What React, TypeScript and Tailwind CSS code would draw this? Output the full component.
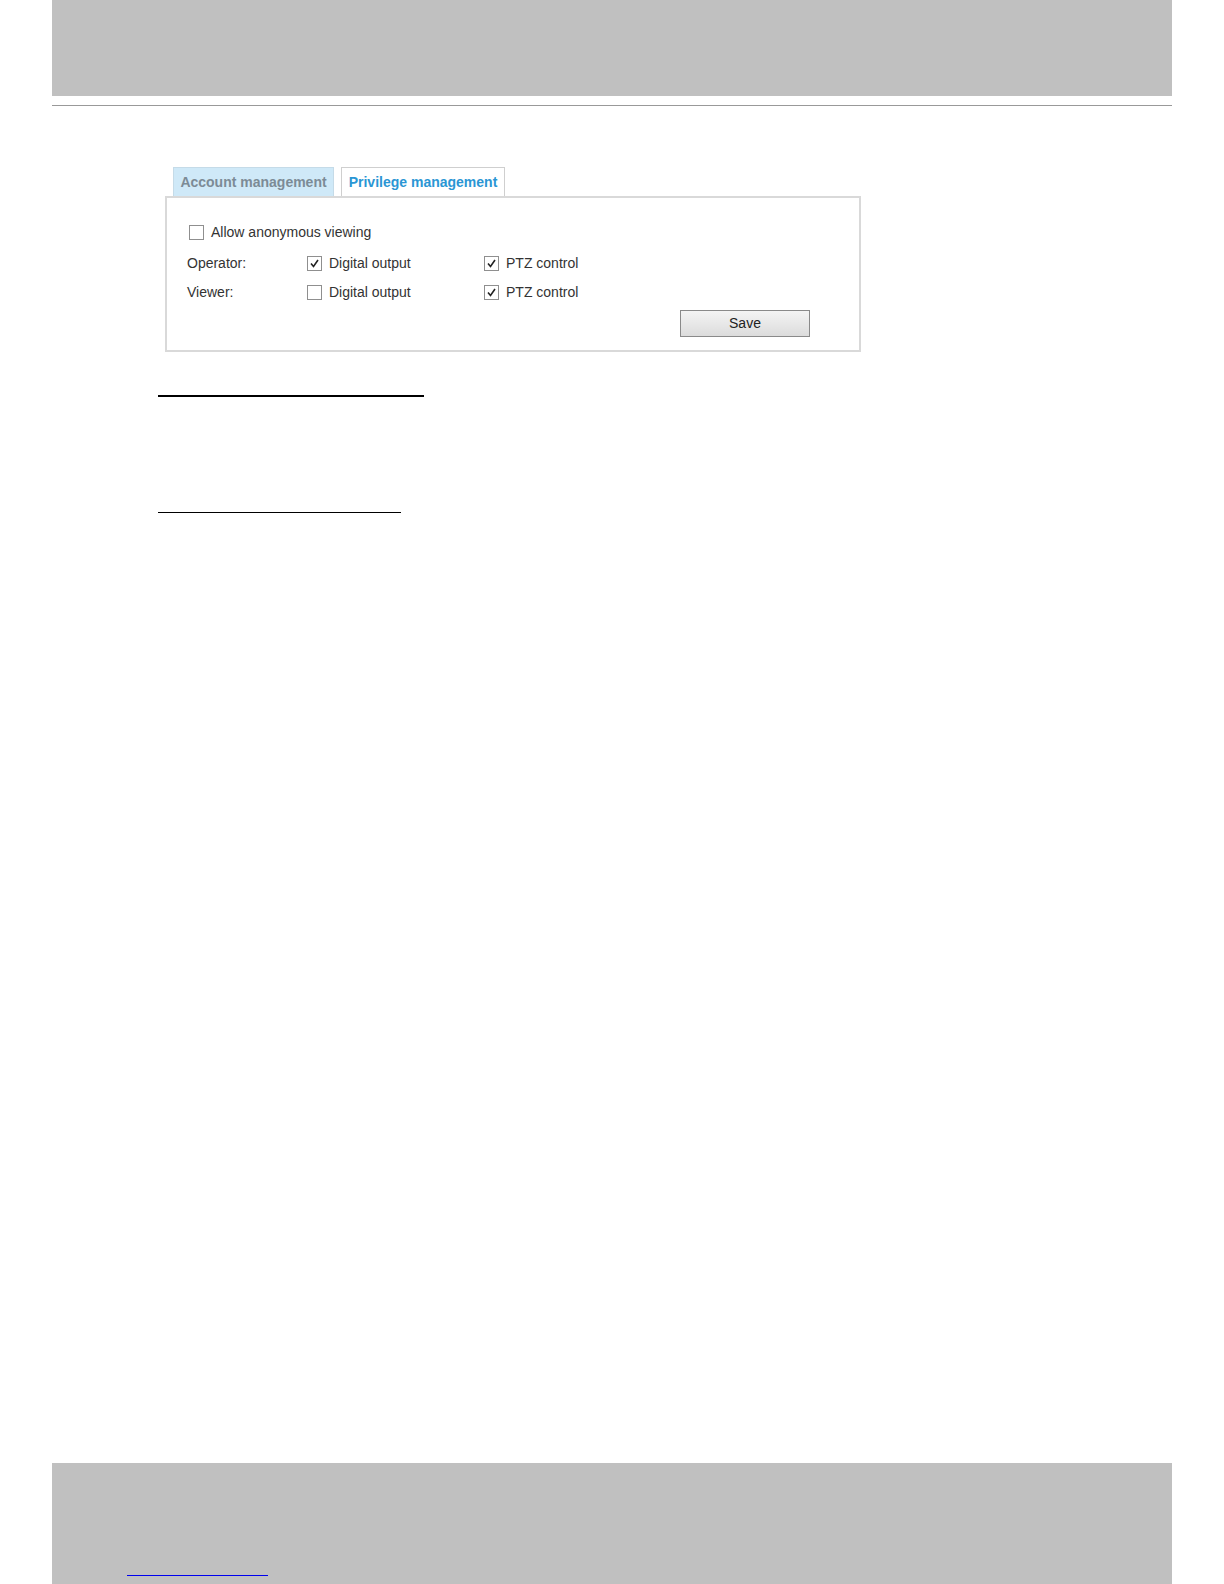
import React from 'react';

const font = { fontFamily: '"Liberation Sans", Arial, sans-serif' };

const Box: React.FC<{ checked?: boolean }> = ({ checked }) => (
  <span className="w-[15px] h-[15px] border border-[#8f8f8f] bg-white flex items-center justify-center shrink-0">
    {checked && (
      <svg width="11" height="11" viewBox="0 0 11 11">
        <path d="M2 5.5 L4.5 8.5 L9 2" fill="none" stroke="#222" strokeWidth="1.6" />
      </svg>
    )}
  </span>
);

const Option: React.FC<{ checked?: boolean; label: string; className?: string }> = ({ checked, label, className }) => (
  <label className={`flex items-center gap-[7px] ${className ?? ''}`}>
    <Box checked={checked} />
    <span>{label}</span>
  </label>
);

const rows = [
  { role: 'Operator:', dio: true, ptz: true },
  { role: 'Viewer:', dio: false, ptz: true },
];

const App: React.FC = () => {
  return (
    <div className="w-[1224px] h-[1584px] bg-white flex flex-col" style={font}>
      {/* header band */}
      <div className="mx-[52px] h-[96px] bg-[#c0c0c0]" />
      <div className="mx-[52px] mt-[9px] h-px bg-[#999]" />

      <div className="flex-1 pl-[165px]">
        {/* tabs */}
        <div className="flex items-end gap-[7px] pl-[8px] mt-[61px] h-[29px] text-[14px] font-bold">
          <div className="h-[29px] w-[161px] bg-[#cfe9f8] border border-b-0 border-[#c5dbe8] flex items-center justify-center text-[#7c8b96]">
            Account management
          </div>
          <div className="h-[29px] w-[164px] bg-white border border-b-0 border-[#cfcfcf] flex items-center justify-center text-[#2a96d4]">
            Privilege management
          </div>
        </div>

        {/* panel */}
        <div className="w-[696px] h-[156px] border-2 border-[#d9d9d9] text-[14px] text-[#333] pl-[20px] pt-[24px]">
          <Option label="Allow anonymous viewing" className="ml-[2px]" />
          <div className="mt-[12px] flex flex-col gap-[13px]">
            {rows.map((r) => (
              <div key={r.role} className="flex items-center h-[16px]">
                <span className="w-[120px]">{r.role}</span>
                <Option checked={r.dio} label="Digital output" className="w-[177px]" />
                <Option checked={r.ptz} label="PTZ control" />
              </div>
            ))}
          </div>
          <div className="flex mt-[10px] pl-[493px]">
            <button className="w-[130px] h-[27px] border border-[#8a8a8a] bg-gradient-to-b from-[#f4f4f4] to-[#dcdcdc] text-[14px] text-[#222]">
              Save
            </button>
          </div>
        </div>

        {/* separator lines */}
        <div className="mt-[43px] -ml-[7px] w-[266px] h-[2px] bg-black" />
        <div className="mt-[115px] -ml-[7px] w-[243px] h-px bg-black" />
      </div>

      {/* footer band */}
      <div className="mx-[52px] h-[121px] bg-[#c0c0c0] flex flex-col justify-end pb-[8px] pl-[75px]">
        <div className="w-[141px] h-px bg-[#0000ee]" />
      </div>
    </div>
  );
};

export default App;
